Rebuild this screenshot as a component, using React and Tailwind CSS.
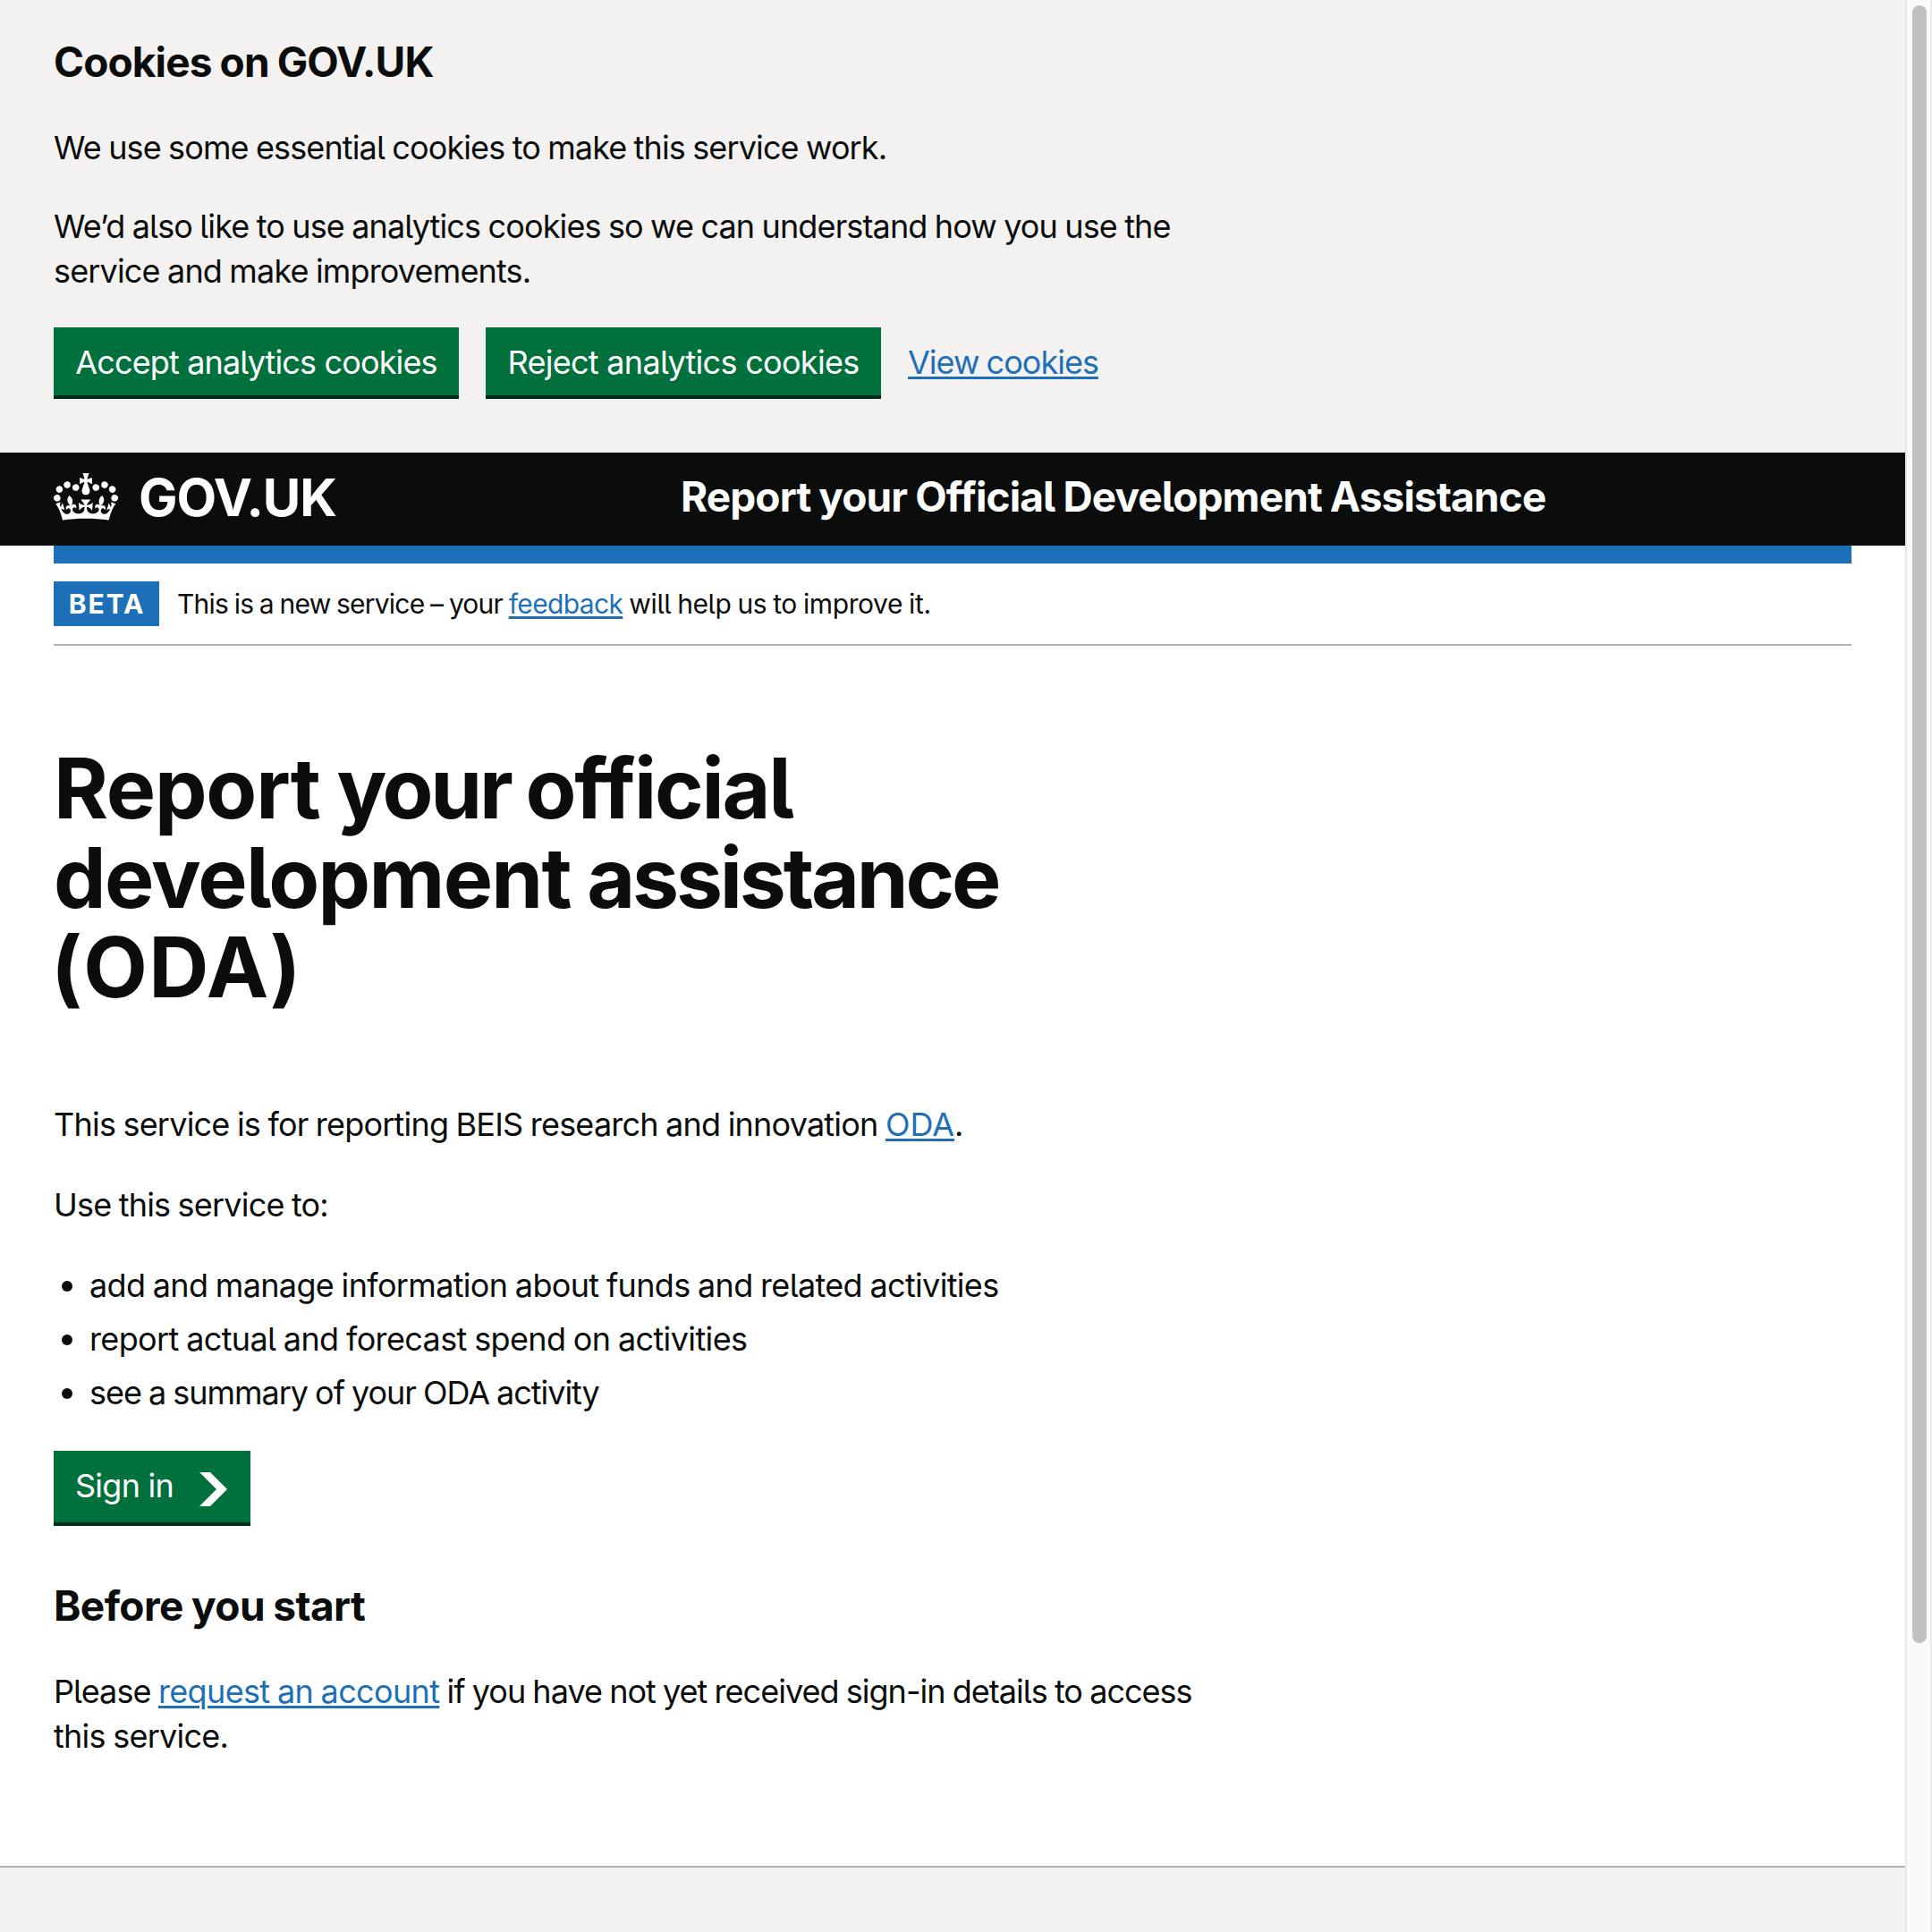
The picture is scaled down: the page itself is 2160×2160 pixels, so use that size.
const LINK = "text-[#1d70b8] underline decoration-[3px] underline-offset-[3px]";

function Crown() {
  return (
    <svg viewBox="0 0 132 97" className="mt-[3px] h-[53px] w-[72px] shrink-0" fill="currentColor" aria-hidden="true">
      <path
        fillRule="evenodd"
        d="M25 30.2c3.5 1.5 7.7-.2 9.1-3.7 1.5-3.6-.2-7.8-3.9-9.2-3.6-1.4-7.6.3-9.1 3.9-1.4 3.5.3 7.5 3.9 9zM9 39.5c3.6 1.5 7.8-.2 9.2-3.7 1.5-3.6-.2-7.8-3.9-9.1-3.6-1.5-7.6.2-9.1 3.8-1.4 3.5.3 7.5 3.8 9zM4.4 57.2c3.5 1.5 7.7-.2 9.1-3.8 1.5-3.6-.2-7.7-3.9-9.1-3.5-1.5-7.6.3-9.1 3.8-1.4 3.5.3 7.6 3.9 9.1zm38.3-21.4c3.5 1.5 7.7-.2 9.1-3.8 1.5-3.6-.2-7.7-3.9-9.1-3.6-1.5-7.6.3-9.1 3.8-1.3 3.6.4 7.7 3.9 9.1zm64.4-5.6c-3.6 1.5-7.8-.2-9.1-3.7-1.5-3.6.2-7.8 3.8-9.2 3.6-1.4 7.7.3 9.2 3.9 1.3 3.5-.4 7.5-3.9 9zm15.9 9.3c-3.6 1.5-7.7-.2-9.1-3.7-1.5-3.6.2-7.8 3.7-9.1 3.6-1.5 7.7.2 9.2 3.8 1.5 3.5-.3 7.5-3.8 9zm4.7 17.7c-3.6 1.5-7.8-.2-9.2-3.8-1.5-3.6.2-7.7 3.9-9.1 3.6-1.5 7.7.3 9.2 3.8 1.3 3.5-.4 7.6-3.9 9.1zM89.3 35.8c-3.6 1.5-7.8-.2-9.2-3.8-1.4-3.6.2-7.7 3.9-9.1 3.6-1.5 7.7.3 9.2 3.8 1.4 3.6-.3 7.7-3.9 9.1zM69.7 17.7l8.9 4.7V9.3l-8.9 2.8c-.2-.3-.5-.6-.9-.9L72.4 0H59.6l3.5 11.2c-.3.3-.6.5-.9.9l-8.8-2.8v13.1l8.8-4.7c.3.3.6.7.9.9l-5 15.4v.1c-.2.8-.4 1.6-.4 2.4 0 4.1 3.1 7.5 7 8.1h.2c.3 0 .7.1 1 .1.4 0 .7 0 1-.1h.2c4-.6 7.1-4.1 7.1-8.1 0-.8-.1-1.7-.4-2.4V34l-5.1-15.4c.4-.2.7-.6 1-.9zM66 92.8c16.9 0 32.8 1.1 47.1 3.2 4-16.9 8.9-26.7 14-33.5l-9.6-3.4c1 4.9 1.1 7.2 0 10.2-1.5-1.4-3-4.3-4.2-8.7L108.6 76c2.8-2 5-3.2 7.5-3.3-4.4 9.4-10 11.9-13.6 11.2-4.3-.8-6.3-4.6-5.6-7.9 1-4.7 5.7-5.9 8-.5 4.3-8.7-3-11.4-7.6-8.8 7.1-7.2 7.9-13.5 2.1-21.1-8 6.1-8.1 12.3-4.5 20.8-4.7-5.4-12.1-2.5-9.5 6.2 3.4-5.2 7.9-2 7.2 3.1-.6 4.3-6.4 7.8-13.5 7.2-10.3-.9-10.9-8-11.2-13.8 2.5-.5 7.1 1.8 11 7.3L80.2 60c-4.1 4.4-8 5.3-12.3 5.4 1.4-4.4 8-11.6 8-11.6H55.5s6.4 7.2 7.9 11.6c-4.2-.1-8-1-12.3-5.4l1.4 16.4c3.9-5.5 8.5-7.7 10.9-7.3-.3 5.8-.9 12.8-11.1 13.8-7.2.6-12.9-2.9-13.5-7.2-.7-5 3.8-8.3 7.1-3.1 2.7-8.7-4.6-11.6-9.4-6.2 3.7-8.5 3.6-14.7-4.6-20.8-5.8 7.6-5 13.9 2.2 21.1-4.7-2.6-11.9.1-7.7 8.8 2.3-5.5 7.1-4.2 8.1.5.7 3.3-1.3 7.1-5.7 7.9-3.5.7-9-1.8-13.5-11.2 2.5.1 4.7 1.3 7.5 3.3l-4.7-15.4c-1.2 4.4-2.7 7.2-4.3 8.7-1.1-3-.9-5.3 0-10.2l-9.5 3.4c5 6.9 9.9 16.7 14 33.5 14.8-2.1 30.8-3.2 47.7-3.2z"
      />
    </svg>
  );
}

function CookieBanner() {
  return (
    <section className="bg-[#f3f2f1] px-[60px] pt-[39px] pb-[60px]">
      <h2 className="text-[46px] leading-[60px] font-bold tracking-[-0.88px]">Cookies on GOV.UK</h2>
      <p className="mt-[41px] tracking-[-0.87px]">We use some essential cookies to make this service work.</p>
      <p className="mt-[38px]">
        <span className="tracking-[-0.86px]">We’d also like to use analytics cookies so we can understand how you use the</span>
        <br />
        <span className="tracking-[-0.84px]">service and make improvements.</span>
      </p>
      <div className="mt-[38px] flex gap-[30px]">
        <button className="h-[80px] w-[453px] border-b-4 border-[#002d18] bg-[#00703c] pt-[2px] text-white tracking-[-0.86px]">
          Accept analytics cookies
        </button>
        <button className="h-[80px] w-[442px] border-b-4 border-[#002d18] bg-[#00703c] pt-[2px] text-white tracking-[-0.7px]">
          Reject analytics cookies
        </button>
        <a href="#" className={`${LINK} mt-[14px] tracking-[-0.98px]`}>View cookies</a>
      </div>
    </section>
  );
}

function Header() {
  return (
    <header className="h-[104px] bg-[#0b0c0c] px-[60px] pt-[20px] text-white">
      <div className="flex items-start">
        <Crown />
        <a href="#" className="ml-[23px] w-[606px] text-[58px] leading-[60px] font-bold tracking-[-1.05px]">GOV.UK</a>
        <a href="#" className="-mt-px text-[46px] leading-[60px] font-bold tracking-[-0.9px]">
          Report your Official Development Assistance
        </a>
      </div>
    </header>
  );
}

function PhaseBanner() {
  return (
    <div className="mx-[60px] flex border-t-[20px] border-b-2 border-t-[#1d70b8] border-b-[#b1b4b6] py-[20px] text-[30px]">
      <strong className="w-[118px] bg-[#1d70b8] pl-px text-center font-bold tracking-[1.9px] text-white">BETA</strong>
      <span className="ml-[20px]">
        <span className="tracking-[-0.79px]">This is a new service – your </span>
        <a href="#" className={`${LINK} tracking-[-0.63px]`}>feedback</a>
        <span className="tracking-[-0.4px]"> will help us to improve it.</span>
      </span>
    </div>
  );
}

const TASKS = [
  { text: "add and manage information about funds and related activities", tracking: "tracking-[-0.66px]" },
  { text: "report actual and forecast spend on activities", tracking: "tracking-[-0.63px]" },
  { text: "see a summary of your ODA activity", tracking: "tracking-[-1.03px]" },
];

function Main() {
  return (
    <main className="px-[60px] pb-[120px]">
      <h1 className="mt-[109px] text-[93px] leading-[100px] font-bold [word-spacing:-2px]">
        <span className="tracking-[-1.2px]">Report </span>
        <span className="tracking-[-3.2px]">your </span>
        <span className="tracking-[-2.2px]">official</span>
        <br />
        <span className="tracking-[-1.7px]">development </span>
        <span className="tracking-[-3.2px]">assistance</span>
        <br />
        <span className="-ml-[3px] tracking-[1.3px]">(ODA)</span>
      </h1>
      <p className="mt-[101px] tracking-[-0.6px]">
        <span className="tracking-[-0.785px]">This service is for reporting BEIS research and innovation </span>
        <a href="#" className={`${LINK} tracking-[0px]`}>ODA</a>.
      </p>
      <p className="mt-[40px] tracking-[-0.8px]">Use this service to:</p>
      <ul className="mt-[40px] flex flex-col gap-[10px]">
        {TASKS.map((task) => (
          <li key={task.text} className="flex">
            <span className="mt-[20px] mr-[19px] ml-[9px] size-[12px] rounded-full bg-[#0b0c0c]" />
            <span className={task.tracking}>{task.text}</span>
          </li>
        ))}
      </ul>
      <button className="mt-[40px] flex h-[84px] w-[220px] border-b-4 border-[#002d18] bg-[#00703c] pt-[14px] pl-[24px] text-white tracking-[-0.75px]">
        Sign in
        <svg viewBox="0 0 31 38" className="mt-[10px] ml-[29px] h-[38px] w-[31px] shrink-0" fill="currentColor" aria-hidden="true">
          <path d="M0 0h12l19 19-19 19H0l19-19z" />
        </svg>
      </button>
      <h2 className="mt-[59px] text-[46px] leading-[60px] font-bold tracking-[-0.6px]">Before you start</h2>
      <p className="mt-[41px]">
        <span className="tracking-[-0.87px]">Please </span>
        <a href="#" className={`${LINK} tracking-[-0.65px]`}>request an account</a>
        <span className="tracking-[-0.97px]"> if you have not yet received sign-in details to access</span>
        <br />
        <span className="tracking-[-0.75px]">this service.</span>
      </p>
    </main>
  );
}

function Scrollbar() {
  return (
    <div className="w-[30px] shrink-0 border-x-2 border-l-[#e8e8e8] border-r-[#ebebeb] bg-[#fafafa] pt-[6px] pl-[6px]">
      <div className="h-[1831px] w-[16px] rounded-full bg-[#c1c1c1]" />
    </div>
  );
}

export default function App() {
  return (
    <div className="flex h-[2160px] w-[2160px] overflow-hidden bg-white font-['Inter','Liberation_Sans',sans-serif] text-[36px] leading-[50px] whitespace-nowrap text-[#0b0c0c] [font-feature-settings:'cv05'] [word-spacing:-1px]">
      <div className="flex w-[2130px] flex-col">
        <CookieBanner />
        <Header />
        <PhaseBanner />
        <Main />
        <footer className="grow border-t-2 border-[#b1b4b6] bg-[#f3f2f1]" />
      </div>
      <Scrollbar />
    </div>
  );
}
